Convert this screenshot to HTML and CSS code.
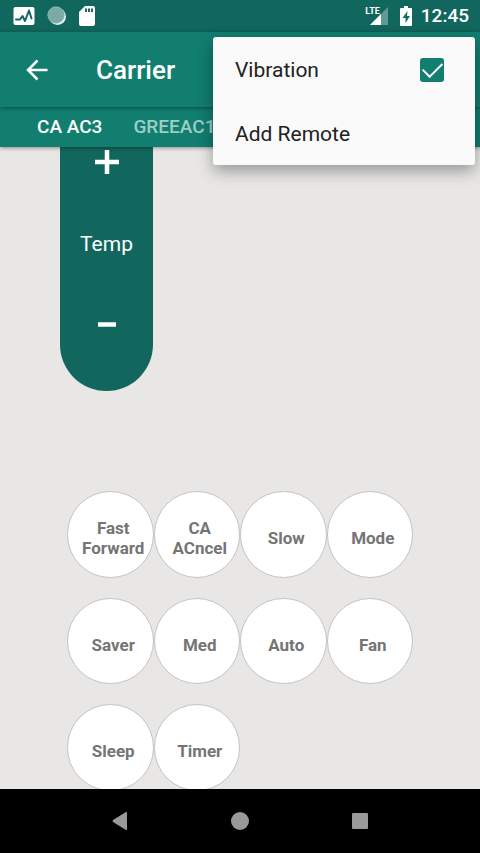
FILE: index.html
```html
<!DOCTYPE html>
<html lang="en">
<head>
<meta charset="utf-8">
<meta name="viewport" content="width=device-width, initial-scale=1">
<title>Carrier</title>
<link rel="stylesheet" href="styles.css">
</head>
<body>
<div class="status">
  <div class="status-group notifications">
    <svg width="22" height="18" viewBox="0 0 22 18"><rect x="0.5" y="0" width="21" height="18" rx="2" fill="#fff"/><path d="M3 12.500h4l2.500-3.500 2.500 5 4-10.500 2.500 8" fill="none" stroke="#13695f" stroke-width="2" stroke-linejoin="round" stroke-linecap="round"/></svg>
    <svg width="20" height="20" viewBox="0 0 20 20"><circle cx="10.500" cy="10.500" r="8.500" fill="#e5f3ef"/><circle cx="9" cy="9" r="8.500" fill="#78aaa3"/><circle cx="9" cy="9" r="8" fill="none" stroke="#a6c9c4" stroke-dasharray="1 1"/><circle cx="9" cy="9" r="5" fill="none" stroke="#90bab3" stroke-dasharray="1 1"/></svg>
    <svg width="16" height="20" viewBox="0 0 16 20"><path d="M6 0h8q2 0 2 2v16q0 2-2 2H2q-2 0-2-2V6z" fill="#fff"/><path d="M6 2.500h2v3.500H6zM9 2.500h2v3.500H9zM12 2.500h2v3.500h-2z" fill="#13695f"/></svg>
  </div>
  <div class="status-group">
    <span class="network">LTE</span>
    <svg class="signal" width="20" height="18" viewBox="0 0 20 18"><path d="M19 0v18H1z" fill="#5f9b92"/><path d="M12 7v11H1z" fill="#fff"/></svg>
    <svg class="battery" width="12" height="20" viewBox="0 0 12 20"><path d="M4 0h4v2h3q1 0 1 1v16q0 1-1 1H1q-1 0-1-1V3q0-1 1-1h3z" fill="#fff"/><path d="M7.500 5L2.500 12h3v5l4.500-7H7z" fill="#13695f"/></svg>
    <span class="clock">12:45</span>
  </div>
</div>
<header class="appbar">
  <button class="back" type="button" aria-label="Back"><svg width="22" height="22" viewBox="0 0 22 22"><path d="M21.500 11H2M11.500 1.500L2 11l9.500 9.500" fill="none" stroke="#fff" stroke-width="2.500"/></svg></button>
  <h1 class="title">Carrier</h1>
</header>
<nav class="tabs">
  <a class="tab active" href="#ca">CA AC3</a>
  <a class="tab" href="#gree">GREEAC1</a>
</nav>
<main class="remote">
  <section class="temp">
    <button type="button" aria-label="Warmer"><svg width="24" height="24" viewBox="0 0 24 24"><path d="M0 12h24M12 0v24" stroke="#fff" stroke-width="4.500"/></svg></button>
    <span class="temp-label">Temp</span>
    <button type="button" aria-label="Cooler"><svg width="18" height="6" viewBox="0 0 18 6"><path d="M0 3.500h18" stroke="#fff" stroke-width="4.500"/></svg></button>
  </section>
  <section class="keys">
    <button class="key" type="button">Fast Forward</button>
    <button class="key" type="button">CA ACncel</button>
    <button class="key" type="button">Slow</button>
    <button class="key" type="button">Mode</button>
    <button class="key" type="button">Saver</button>
    <button class="key" type="button">Med</button>
    <button class="key" type="button">Auto</button>
    <button class="key" type="button">Fan</button>
    <button class="key" type="button">Sleep</button>
    <button class="key" type="button">Timer</button>
  </section>
</main>
<footer class="navbar">
  <button type="button" aria-label="Back"><svg width="20" height="20" viewBox="0 0 20 20"><path d="M17 1.500v17q0 1-1 .500L3 11q-1-1 0-2L16 1q1-.500 1 .500z" fill="#999"/></svg></button>
  <button type="button" aria-label="Home"><svg width="20" height="20" viewBox="0 0 20 20"><circle cx="10" cy="10" r="9" fill="#999"/></svg></button>
  <button type="button" aria-label="Recents"><svg width="20" height="20" viewBox="0 0 20 20"><rect x="2" y="2" width="16" height="16" rx="1" fill="#999"/></svg></button>
</footer>
<div class="menu">
  <label class="menu-item" for="vibration">Vibration<input class="check" id="vibration" type="checkbox" checked></label>
  <button class="menu-item" type="button">Add Remote</button>
</div>
</body>
</html>
```
FILE: styles.css
```css
* {
  box-sizing: border-box;
}

body {
  margin: 0;
  height: 100vh;
  display: flex;
  flex-direction: column;
  overflow: hidden;
  background: #e8e7e6;
  font-family: Roboto, "Liberation Sans", sans-serif;
}

button {
  border: 0;
  padding: 0;
  background: none;
  font: inherit;
  color: inherit;
}

svg {
  display: block;
}

.status {
  flex: none;
  height: 32px;
  padding: 0 11px 0 13px;
  display: flex;
  justify-content: space-between;
  align-items: center;
  background: #11675d;
  color: #fff;
}

.status-group {
  display: flex;
  align-items: center;
}

.notifications {
  gap: 12px;
}

.network {
  align-self: flex-start;
  padding-top: 2px;
  font: bold 9px/10px "Liberation Sans Narrow", Roboto, sans-serif;
}

.signal {
  margin-left: -11px;
}

.battery {
  margin: 0 9px 0 11px;
}

.clock {
  font-size: 19px;
  line-height: 24px;
  font-weight: 500;
}

.appbar {
  flex: none;
  position: relative;
  z-index: 2;
  height: 75px;
  padding-left: 26px;
  display: flex;
  align-items: center;
  gap: 48px;
  background: #117e6f;
  color: #fff;
  box-shadow: 0 1px 4px rgba(0, 0, 0, 0.4);
}

.title {
  margin: 0;
  font-size: 26px;
  line-height: 32px;
  font-weight: 500;
}

.tabs {
  flex: none;
  position: relative;
  z-index: 1;
  height: 40px;
  padding-left: 37px;
  display: flex;
  align-items: center;
  gap: 31px;
  background: #117e6f;
  box-shadow: 0 1px 4px rgba(0, 0, 0, 0.4);
}

.tab {
  color: #9fcdc5;
  font-size: 19px;
  line-height: 24px;
  font-weight: 500;
  text-decoration: none;
}

.tab.active {
  color: #fff;
}

.remote {
  flex: 1;
  min-height: 0;
  overflow: hidden;
}

.temp {
  width: 93px;
  margin-left: 60px;
  padding-bottom: 52px;
  display: grid;
  grid-template-rows: 30px 132px 30px;
  place-items: center;
  border-radius: 0 0 47px 47px;
  background: #11675d;
  color: #fff;
}

.temp-label {
  padding-top: 2px;
  font-size: 21px;
  line-height: 24px;
}

.keys {
  margin: 100px 67px 0;
  display: grid;
  grid-template-columns: repeat(4, 1fr);
  row-gap: 20px;
}

.key {
  aspect-ratio: 1;
  min-width: 0;
  padding: 8px 0 0 6px;
  border: 1px solid #c4c4c4;
  border-radius: 50%;
  background: #fff;
  color: #757575;
  font-size: 17px;
  line-height: 20px;
  font-weight: 700;
}

.navbar {
  flex: none;
  height: 64px;
  padding: 0 60px;
  display: flex;
  align-items: center;
  background: #000;
}

.navbar button {
  flex: 1;
  display: grid;
  place-items: center;
}

.menu {
  position: absolute;
  z-index: 3;
  top: 37px;
  right: 5px;
  width: 262px;
  border-radius: 3px;
  background: #fafafa;
  box-shadow: 0 6px 16px rgba(0, 0, 0, 0.35);
}

.menu-item {
  width: 100%;
  height: 64px;
  padding: 2px 31px 0 22px;
  display: flex;
  align-items: center;
  justify-content: space-between;
  color: #212121;
  font-size: 21px;
  line-height: 24px;
}

.check {
  appearance: none;
  width: 24px;
  height: 24px;
  margin: 0;
  display: grid;
  place-items: center;
  border-radius: 3px;
  background: #117e6f;
}

.check:checked::before {
  content: "";
  width: 17px;
  height: 9px;
  margin-bottom: 6px;
  border: solid #fff;
  border-width: 0 0 2px 2px;
  transform: rotate(-45deg);
}
```
